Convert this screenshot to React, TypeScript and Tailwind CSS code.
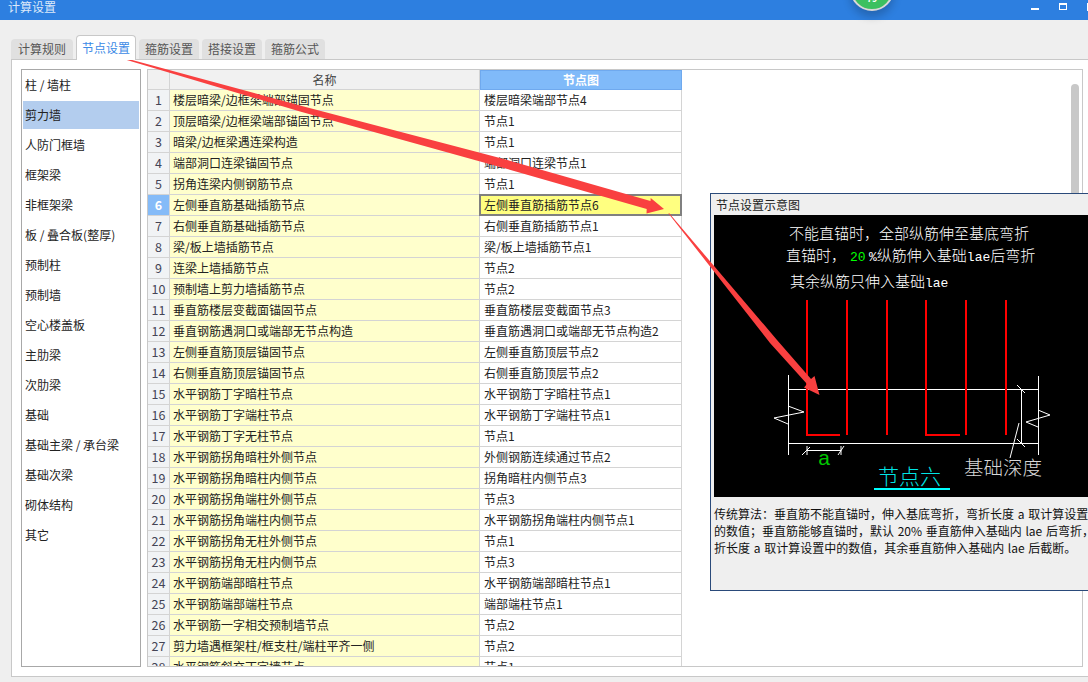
const rows: [string, string][] = [
  ["楼层暗梁/边框梁端部锚固节点", "楼层暗梁端部节点4"],
  ["顶层暗梁/边框梁端部锚固节点", "节点1"],
  ["暗梁/边框梁遇连梁构造", "节点1"],
  ["端部洞口连梁锚固节点", "端部洞口连梁节点1"],
  ["拐角连梁内侧钢筋节点", "节点1"],
  ["左侧垂直筋基础插筋节点", "左侧垂直筋插筋节点6"],
  ["右侧垂直筋基础插筋节点", "右侧垂直筋插筋节点1"],
  ["梁/板上墙插筋节点", "梁/板上墙插筋节点1"],
  ["连梁上墙插筋节点", "节点2"],
  ["预制墙上剪力墙插筋节点", "节点2"],
  ["垂直筋楼层变截面锚固节点", "垂直筋楼层变截面节点3"],
  ["垂直钢筋遇洞口或端部无节点构造", "垂直筋遇洞口或端部无节点构造2"],
  ["左侧垂直筋顶层锚固节点", "左侧垂直筋顶层节点2"],
  ["右侧垂直筋顶层锚固节点", "右侧垂直筋顶层节点2"],
  ["水平钢筋丁字暗柱节点", "水平钢筋丁字暗柱节点1"],
  ["水平钢筋丁字端柱节点", "水平钢筋丁字端柱节点1"],
  ["水平钢筋丁字无柱节点", "节点1"],
  ["水平钢筋拐角暗柱外侧节点", "外侧钢筋连续通过节点2"],
  ["水平钢筋拐角暗柱内侧节点", "拐角暗柱内侧节点3"],
  ["水平钢筋拐角端柱外侧节点", "节点3"],
  ["水平钢筋拐角端柱内侧节点", "水平钢筋拐角端柱内侧节点1"],
  ["水平钢筋拐角无柱外侧节点", "节点1"],
  ["水平钢筋拐角无柱内侧节点", "节点3"],
  ["水平钢筋端部暗柱节点", "水平钢筋端部暗柱节点1"],
  ["水平钢筋端部端柱节点", "端部端柱节点1"],
  ["水平钢筋一字相交预制墙节点", "节点2"],
  ["剪力墙遇框架柱/框支柱/端柱平齐一侧", "节点2"],
  ["水平钢筋斜交丁字墙节点", "节点1"],
];

const listItems = ["柱 / 墙柱", "剪力墙", "人防门框墙", "框架梁", "非框架梁", "板 / 叠合板(整厚)", "预制柱", "预制墙", "空心楼盖板", "主肋梁", "次肋梁", "基础", "基础主梁 / 承台梁", "基础次梁", "砌体结构", "其它"];

const cjk = "font-['Noto_Sans_CJK_SC','Noto_Sans',sans-serif]";

function Diagram() {
  const font = "'Liberation Mono','Noto Sans CJK SC',monospace";
  const ox = 714;
  const oy = 215;
  return (
    <svg width="374" height="282" viewBox={`${ox} ${oy} 374 282`} className="block">
      <rect x={ox} y={oy} width="374" height="282" fill="#000" />
      <g fill="#fff" fontSize="15" fontWeight="300" fontFamily="'Noto Sans CJK SC',sans-serif">
        <text x="789" y="238.5">不能直锚时，全部纵筋伸至基底弯折</text>
        <text x="786" y="260.5">直锚时，</text>
        <text x="850" y="260.5" fill="#00ff00" fontSize="13" fontFamily={font}>20</text>
        <text x="869" y="260.5">
          <tspan fontSize="13" fontFamily={font}>%</tspan>纵筋伸入基础<tspan fontSize="13" fontFamily={font}>lae</tspan>后弯折
        </text>
        <text x="790" y="286.5">
          其余纵筋只伸入基础<tspan fontSize="13" fontFamily={font}>lae</tspan>
        </text>
      </g>
      <g stroke="#fff" strokeWidth="1" fill="none" shapeRendering="crispEdges">
        <path d="M788.5 375V455M1038.5 376V455M788 389.5H1039M788 443.5H1039M1021.5 389V443M807 450.5H841" />
      </g>
      <g stroke="#fff" strokeWidth="1" fill="none">
        <path d="M788 406L804 412L774 418L788 424" />
        <path d="M1038 410L1050 415L1026 422L1038 427" />
        <path d="M1017 385L1025 393M1017 439L1025 447M1019 423L1010 458" />
        <path d="M802 455L810 447M807 446V455M838 455L844 446M841 446V455" />
      </g>
      <g stroke="#ff0000" strokeWidth="2" fill="none" shapeRendering="crispEdges">
        <path d="M807 300V435H840M847 300V435M887 300V435M926 300V435H960M966 300V435M1006 300V435" />
      </g>
      <text x="824" y="465" fill="#00c800" fontSize="21" textAnchor="middle" fontFamily="'Liberation Sans',sans-serif">a</text>
      <text x="878" y="484" fill="#00e5e5" fontSize="21" fontWeight="300" fontFamily="'Noto Sans CJK SC',sans-serif">节点六</text>
      <rect x="874" y="488" width="76" height="2" fill="#00ffff" />
      <text x="964" y="475" fill="#d8d8d8" fontSize="19.5" fontWeight="300" fontFamily="'Noto Sans CJK SC',sans-serif">基础深度</text>
    </svg>
  );
}

export default function App() {
  return (
    <div className={`relative w-[1088px] h-[682px] overflow-hidden bg-[#efefef] text-xs text-[#222] ${cjk}`}>
      {/* Title bar */}
      <div className="flex h-5 items-center justify-between bg-[#2d7fe0] pl-2 text-white">
        <span className="-mt-[7px] text-[#dce9fa]">计算设置</span>
        <div className="flex items-start self-start">
          <div className="mt-2 h-[2px] w-2 bg-white" />
          <div className="ml-5 mt-[3px] h-[7px] w-2 border border-t-2 border-white" />
          <div className="ml-5 mt-[3px] h-2 w-px bg-white" />
        </div>
      </div>

      {/* Tabs */}
      <div className="flex h-[39px] items-end pl-[11px]">
        <div className="flex h-5 w-[62px] items-center justify-center rounded-t bg-[#e0e0e0] text-[#555]">计算规则</div>
        <div className="relative z-10 ml-[3px] -mb-px flex h-[25px] w-[60px] items-center justify-center rounded-t border border-b-0 border-[#c8c8c8] bg-white text-[#3b8ae6]">节点设置</div>
        <div className="ml-[3px] flex h-5 w-[60px] items-center justify-center rounded-t bg-[#e0e0e0] text-[#555]">箍筋设置</div>
        <div className="ml-[3px] flex h-5 w-[60px] items-center justify-center rounded-t bg-[#e0e0e0] text-[#555]">搭接设置</div>
        <div className="ml-[3px] flex h-5 w-[60px] items-center justify-center rounded-t bg-[#e0e0e0] text-[#555]">箍筋公式</div>
      </div>

      {/* Panel */}
      <div className="ml-[11px] flex h-[618px] w-[1090px] gap-[6px] border border-[#c8c8c8] bg-white pl-[9px] pt-[9px]">
        {/* Side list */}
        <div className="flex h-[598px] w-[120px] flex-col gap-[2px] border border-[#a8a8a8] px-px pt-px">
          {listItems.map((item, i) => (
            <div key={item} className={`flex h-[28px] items-center pl-[2px] ${i === 1 ? "bg-[#b3cdee]" : ""}`}>
              {item}
            </div>
          ))}
        </div>

        {/* Table frame */}
        <div className="relative h-[598px] w-[936px] overflow-hidden border border-[#c8c8c8]">
          <div className="flex h-5 text-[#444]">
            <div className="w-[22px] border-b border-r border-[#d4d4d4] bg-[#f1f1f1]" />
            <div className="flex w-[310px] items-center justify-center border-b border-r border-[#d4d4d4] bg-[#f1f1f1]">名称</div>
            <div className="flex w-[202px] items-center justify-center border border-[#6fa9ee] bg-[#80baf9] font-bold text-white">节点图</div>
          </div>
          {rows.map(([name, node], i) => {
            const sel = i === 5;
            return (
              <div key={name} className="flex h-[21px] whitespace-nowrap">
                <div className={`flex w-[22px] items-center justify-center border-b border-r border-[#d4d4d4] text-[12.5px] ${sel ? "bg-[#85bbf8] font-bold text-white" : "bg-[#f1f3f5] text-[#445]"}`}>
                  {i + 1}
                </div>
                <div className="flex w-[310px] items-center overflow-hidden border-b border-r border-[#d4d4d4] bg-[#ffffcc] pl-[3px]">{name}</div>
                <div className={`flex items-center overflow-hidden ${sel ? "relative -ml-px -mt-px h-[22px] w-[203px] border-2 border-[#808080] bg-[#ffff80] pl-[3px]" : "w-[202px] border-b border-r border-[#d4d4d4] pl-1"}`}>{node}</div>
              </div>
            );
          })}
          <div className="absolute right-[3px] top-[14px] h-[300px] w-2 rounded-t bg-[#c8c8c8]" />
        </div>
      </div>

      {/* Floating preview */}
      <div className="absolute left-[710px] top-[193px] h-[398px] w-[400px] border border-[#2a4a7a] bg-[#efefef]">
        <div className="flex h-[21px] items-center pl-[5px] text-[#222]">节点设置示意图</div>
        <div className="ml-[3px]">
          <Diagram />
        </div>
        <div className="ml-[3px] mt-[8px] whitespace-nowrap leading-[17px] text-[#111] [word-spacing:1px]">
          <div>传统算法：垂直筋不能直锚时，伸入基底弯折，弯折长度 a 取计算设置中</div>
          <div>的数值；垂直筋能够直锚时，默认 20% 垂直筋伸入基础内 lae 后弯折，弯</div>
          <div>折长度 a 取计算设置中的数值，其余垂直筋伸入基础内 lae 后截断。</div>
        </div>
      </div>

      {/* Floating green badge */}
      <div className="absolute left-[850px] top-[-33px] flex h-[44px] w-[44px] items-end justify-center rounded-full border-2 border-[#d8d8d8] bg-[#3cc060] pb-[5px] text-[9px] font-bold leading-[11px] text-white shadow-[0_6px_8px_rgba(0,0,0,0.2)]">79</div>

      {/* Annotation arrows */}
      <svg className="pointer-events-none absolute left-0 top-0" width="1088" height="682" viewBox="0 0 1088 682">
        <polygon points="110,54 300,105.5 500,158 650.5,201 650.7,198 664,209 646.5,213.5 646.7,209 500,167 300,111.5 110,55" fill="#f94040" />
        <polygon points="669,213 777,340 811,379 814.5,376 819.5,395 804,387.5 807,384 770,343 668.5,213.5" fill="#f94040" />
      </svg>
    </div>
  );
}
